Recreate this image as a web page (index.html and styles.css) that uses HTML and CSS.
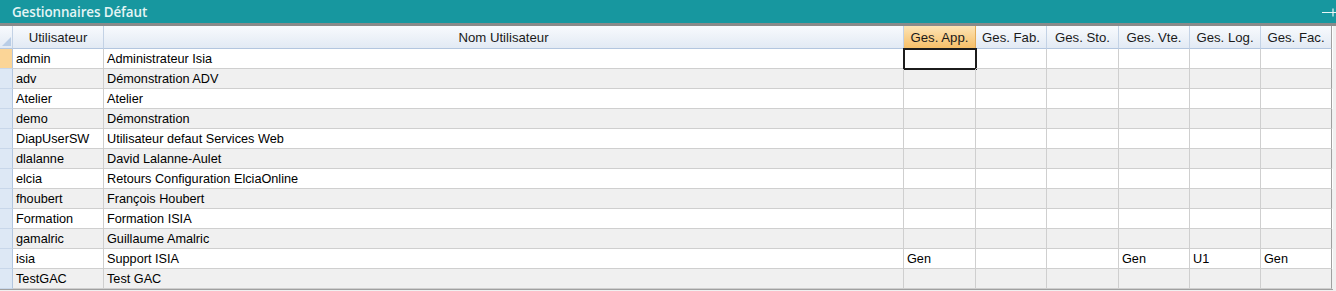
FILE: index.html
```html
<!DOCTYPE html>
<html lang="fr">
<head>
    <meta charset="UTF-8">
    <title>Gestionnaires Défaut</title>
    <link rel="stylesheet" href="styles.css">
</head>
<body>
    <div class="panel">
        <div class="title-bar">
            <span class="title">Gestionnaires Défaut</span>
            <svg class="pin" width="14" height="10" viewBox="0 0 14 10">
                <path d="M0 5.5H11M11 1.5V9.5M11 5.5H14" stroke="#e8f6f6" stroke-width="1.2" fill="none"/>
            </svg>
        </div>

        <div class="grid">
            <div class="row head">
                <div class="cell corner">
                    <svg width="9" height="9" viewBox="0 0 9 9"><path d="M9 0V9H0Z" fill="#b9cde6"/></svg>
                </div>
                <div class="cell">Utilisateur</div>
                <div class="cell">Nom Utilisateur</div>
                <div class="cell active">Ges. App.</div>
                <div class="cell">Ges. Fab.</div>
                <div class="cell">Ges. Sto.</div>
                <div class="cell">Ges. Vte.</div>
                <div class="cell">Ges. Log.</div>
                <div class="cell">Ges. Fac.</div>
            </div>
            <div id="rows"></div>
        </div>
    </div>

    <script>
        const users = [
            ['admin', 'Administrateur Isia', '', '', '', '', '', ''],
            ['adv', 'Démonstration ADV', '', '', '', '', '', ''],
            ['Atelier', 'Atelier', '', '', '', '', '', ''],
            ['demo', 'Démonstration', '', '', '', '', '', ''],
            ['DiapUserSW', 'Utilisateur defaut Services Web', '', '', '', '', '', ''],
            ['dlalanne', 'David Lalanne-Aulet', '', '', '', '', '', ''],
            ['elcia', 'Retours Configuration ElciaOnline', '', '', '', '', '', ''],
            ['fhoubert', 'François Houbert', '', '', '', '', '', ''],
            ['Formation', 'Formation ISIA', '', '', '', '', '', ''],
            ['gamalric', 'Guillaume Amalric', '', '', '', '', '', ''],
            ['isia', 'Support ISIA', 'Gen', '', '', 'Gen', 'U1', 'Gen'],
            ['TestGAC', 'Test GAC', '', '', '', '', '', '']
        ];

        const container = document.getElementById('rows');

        users.forEach((user, i) => {
            const row = document.createElement('div');
            row.className = 'row' + (i % 2 ? ' alt' : '');

            const selector = document.createElement('div');
            selector.className = 'cell selector' + (i === 0 ? ' current' : '');
            row.appendChild(selector);

            user.forEach((value, col) => {
                const cell = document.createElement('div');
                cell.className = 'cell';
                if (i === 0 && col === 2) {
                    cell.className += ' focused';
                }
                cell.textContent = value;
                row.appendChild(cell);
            });

            container.appendChild(row);
        });
    </script>
</body>
</html>
```

FILE: styles.css
```css
body {
    margin: 0;
    background: #f0f0f0;
    font-family: 'Liberation Sans', Arial, sans-serif;
    font-size: 12.7px;
    color: #000;
}

.panel {
    width: 1336px;
    height: 291px;
    overflow: hidden;
}

.title-bar {
    display: flex;
    align-items: center;
    justify-content: space-between;
    height: 23px;
    padding-left: 12px;
    background: #17979f;
    border-bottom: 3px solid #8a8a8a;
}

.title {
    font-family: 'Open Sans', sans-serif;
    font-weight: 600;
    font-size: 13.4px;
    color: #e4f5f5;
    letter-spacing: -0.1px;
}

.grid {
    width: 1333px;
    border-bottom: 1px solid #a0a0a0;
}

.row {
    display: grid;
    grid-template-columns: 13px 91px 800px 72px 71px 72px 71px 71px 71px;
    background: #fff;
}

.row.alt {
    background: #f0f0f0;
}

.cell {
    box-sizing: border-box;
    height: 20px;
    line-height: 20px;
    padding: 0 3px;
    border-right: 1px solid #cfcfcf;
    border-bottom: 1px solid #cfcfcf;
    white-space: nowrap;
    overflow: hidden;
}

.row .cell:last-child {
    border-right-color: #a0a0a0;
}

.head .cell {
    height: 23px;
    line-height: 23px;
    font-size: 13.2px;
    text-align: center;
    color: #1a1a1a;
    background: linear-gradient(#f8fafd, #e2eaf4);
    border-right-color: #c3d2e5;
    border-bottom-color: #b3c6df;
}

.head .cell.active {
    background: linear-gradient(#fde4b6, #f6bf68);
    border-right-color: #e3ac5a;
}

.head .corner {
    display: flex;
    align-items: flex-end;
    justify-content: flex-end;
    padding: 0 1px 2px 0;
}

.selector {
    padding: 0;
    background: #dde8f5;
    border-right-color: #b3c6df;
    border-bottom-color: #c8d7ea;
}

.selector.current {
    background: #fbd597;
}

.focused {
    outline: 2px solid #1c1c1c;
    outline-offset: -1px;
}
```
